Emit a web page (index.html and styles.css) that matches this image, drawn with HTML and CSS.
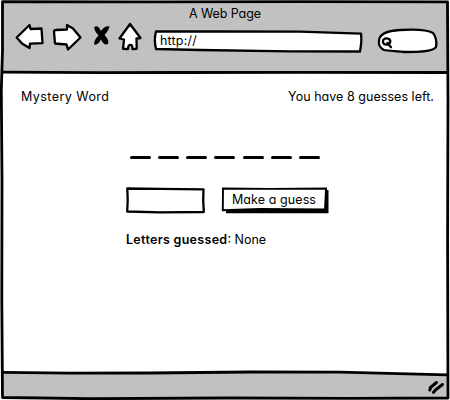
FILE: index.html
```html
<!DOCTYPE html>
<html lang="en">
<head>
<meta charset="utf-8">
<title>A Web Page</title>
<link rel="stylesheet" href="styles.css">
</head>
<body>
<div class="window">
  <svg class="frame" viewBox="0 0 450 400" aria-hidden="true">
    <path class="chrome" d="M2 2H448V72.500H3Z"/>
    <path class="chrome" d="M3 372.500L150 373L250 372L350 372.300L448 374.800V398H3Z"/>
    <path class="edge" d="M2.500 1.700L150 1.900L300 1.600L447.500 1.900L448 100L447.600 240L448 398L350 398.300L230 398L90 398.700L2.500 397.500L1.800 300L2 180L1.300 90L2.500 50Z"/>
    <path class="edge" d="M3 72.200L100 72.700L180 72.500L300 72.300L447 72.500"/>
    <path class="edge" d="M3 372.300L70 373.200L150 373L250 372L340 372.200L447 374.900"/>
  </svg>
  <header class="header">
    <div class="title"><span class="t-title">A Web Page</span></div>
    <nav class="toolbar">
      <svg class="ink back" width="30" height="30" viewBox="14 22 30 30"><path d="M16.700 37.500L29.500 25L30.600 29L41.500 28.500L42.500 43.200L30 43.700L29.500 48L22 43.500Z"/></svg>
      <svg class="ink forward" width="32" height="30" viewBox="51 22 32 30"><path d="M54 31.500Q54 30 56 30L67 29.500V25L73 28.500L80.500 37.500L68 49.500L66.500 44.500L55 43.500Z"/></svg>
      <svg class="stop" width="18" height="22" viewBox="93 25 18 22"><path d="M94.500 27Q98 24.500 101 31Q105 25 109.500 26.500Q109 30 104.500 35Q109.500 40 108 44Q104 46 101 39.500Q98 45.500 94.300 44.500Q93.300 41 98.500 35.500Q93.500 29.500 94.500 27Z"/></svg>
      <svg class="ink home" width="26" height="30" viewBox="117 21 26 30"><path d="M119.500 38.500L130 24L140.500 38L136.500 38.500L136.700 48.800L132.500 49L132 45.500Q130 44 128.500 46L128 49L123 48.800L124 39.500Z"/></svg>
      <div class="address">
        <svg class="ink shape" width="212" height="26" viewBox="152 28 212 26"><path d="M156 31.500L220 31.500L300 31.700L361 33.700Q362 41 360 51.500L290 51.300L200 50L156 49Q153.700 40 156 31.500Z"/></svg>
        <span class="t-url">http://</span>
      </div>
      <svg class="ink search" width="64" height="28" viewBox="375 27 64 28"><path d="M379 41C379 36 384 31 400 30C415 29 428 30 433 33C436 36 437 43 436 47C433 52 417 52 405 52C396 51 388 51 384 50C380 48 378.500 44 379 41Z"/><path d="M383.500 39.500Q386 37.300 389.500 39.200Q391.500 42 388.500 44.300Q384.500 45.500 383.200 43Q382.700 41 383.500 39.500ZM387.500 43L391 47.200"/></svg>
    </nav>
  </header>
  <main class="page">
    <div class="status"><span class="t-name">Mystery Word</span><span class="t-left">You have 8 guesses left.</span></div>
    <section class="game">
      <div class="blanks"><i></i><i></i><i></i><i></i><i></i><i></i><i></i></div>
      <div class="controls">
        <svg class="ink field" width="80" height="28" viewBox="125 186 80 28"><path d="M127.300 188.500L160 188.800L203.500 189.300L203.200 200L203.800 212L160 212.300L127.200 211.500L127.700 200Z"/></svg>
        <div class="button">
          <svg class="shape" width="108" height="28" viewBox="221 186 108 28"><path d="M227 190H328.500V213.200H226Z"/><path class="face" d="M223 188.500L270 188.900L326 188.500L325 209.500L260 209L222.800 210.300Z"/></svg>
          <span class="t-button">Make a guess</span>
        </div>
      </div>
      <p class="letters"><b>Letters guessed</b>: None</p>
    </section>
  </main>
  <footer class="footer"><svg width="18" height="16" viewBox="427 379 18 16"><path d="M429.800 390L430.500 387.500L436.500 382.500M433.500 392.300L436 389.500L442.500 384.500"/></svg></footer>
</div>
</body>
</html>
```
FILE: styles.css
```css
body {
  margin: 0;
  background: #fff;
  color: #000;
  font: 12.500px/16px Inter, "Liberation Sans", sans-serif;
  font-feature-settings: "cv11" 1;
}
.window {
  position: relative;
  width: 450px;
  height: 400px;
  display: flex;
  flex-direction: column;
  overflow: hidden;
}
.frame { position: absolute; inset: 0; }
.chrome { fill: #c1c1c1; }
.edge { fill: none; stroke: #000; stroke-width: 2.8; stroke-linejoin: round; }
.header, .page, .footer { position: relative; }
.header { height: 74px; box-sizing: border-box; padding-top: 6px; }
.title { text-align: center; height: 15px; }
.toolbar { display: flex; align-items: flex-start; padding-left: 14px; }
.toolbar svg, .controls svg { display: block; flex: none; }
.ink { fill: #fff; stroke: #000; stroke-width: 2.3; stroke-linejoin: round; stroke-linecap: round; }
.back { margin-top: 1px; }
.forward { margin: 1px 0 0 7px; }
.stop { margin: 4px 0 0 10px; }
.home { margin-left: 6px; }
.address { position: relative; width: 212px; height: 26px; margin: 7px 0 0 9px; }
.shape { position: absolute; inset: 0; }
.address span { position: relative; display: block; padding: 5px 0 0 8px; }
.search { margin: 6px 0 0 11px; }
.page { height: 299px; }
.status { display: flex; justify-content: space-between; padding: 15px 16px 0 21px; }
.game { padding: 51px 0 0 125px; }
.blanks { display: flex; gap: 7.300px; padding-left: 4.500px; }
.blanks i { width: 21px; height: 3px; border-radius: 1.500px; background: #000; }
.controls { display: flex; gap: 16px; margin-top: 27px; }
.button { position: relative; width: 108px; height: 28px; }
.button span { position: relative; display: block; padding: 6px 0 0 11px; }
.face { fill: #fff; stroke: #000; stroke-width: 1.900; }
.letters { margin: 18px 0 0 1px; }
.letters b { font-weight: 600; letter-spacing: 0.300px; }
.t-title, .t-button, .t-left, .t-name, .t-url { white-space: nowrap; }
.t-title { letter-spacing: -0.100px; }
.t-name { letter-spacing: 0.450px; }
.t-url { letter-spacing: 0.200px; }
.t-left { letter-spacing: 0.040px; }
.t-button { letter-spacing: 0.080px; }
.footer { display: flex; justify-content: flex-end; padding: 6px 5px 0 0; }
.footer path { fill: none; stroke: #000; stroke-width: 3; stroke-linecap: round; stroke-linejoin: round; }
```
